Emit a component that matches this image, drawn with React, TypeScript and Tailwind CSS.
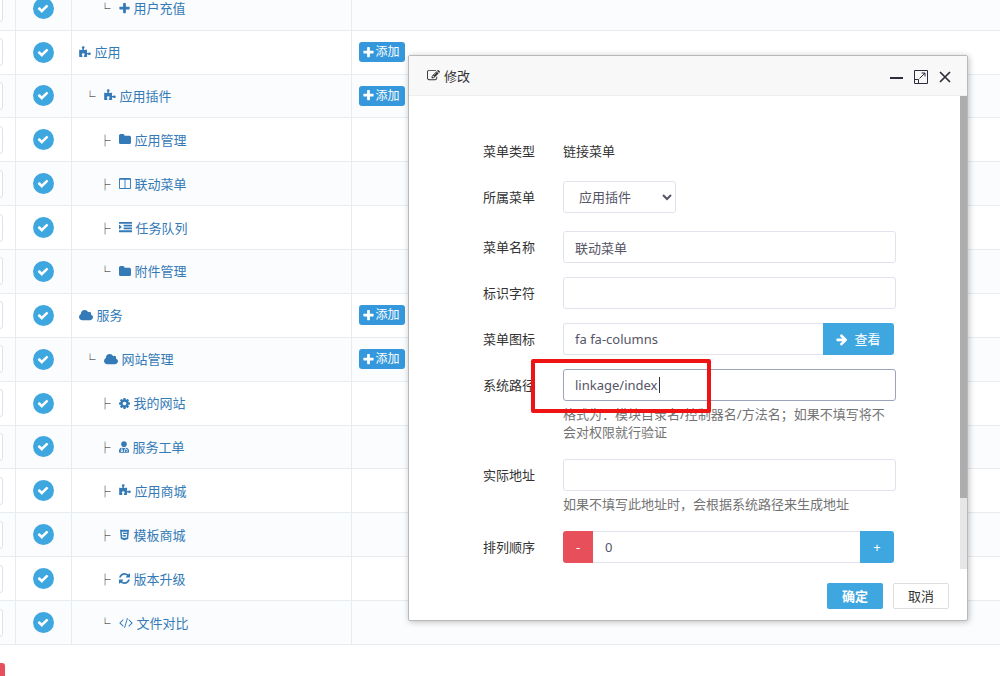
import React, { useId } from "react";
import { FaHtml5, FaUserMd } from "react-icons/fa";

const paths = {
  plus: "M1600 736v192q0 40-28 68t-68 28h-416v416q0 40-28 68t-68 28h-192q-40 0-68-28t-28-68v-416h-416q-40 0-68-28t-28-68v-192q0-40 28-68t68-28h416v-416q0-40 28-68t68-28h192q40 0 68 28t28 68v416h416q40 0 68 28t28 68z",
  arrow: "M1600 960q0 54-37 91l-651 651q-39 37-91 37-51 0-90-37l-75-75q-38-38-38-91t38-91l293-293h-704q-52 0-84.5-37.5t-32.5-90.5v-128q0-53 32.5-90.5t84.5-37.5h704l-293-294q-38-36-38-90t38-90l75-75q38-38 90-38 53 0 91 38l651 651q37 35 37 90z",
  folder: "M1728 608v704q0 92-66 158t-158 66h-1216q-92 0-158-66t-66-158v-960q0-92 66-158t158-66h320q92 0 158 66t66 158v32h672q92 0 158 66t66 158z",
  cloud: "M1984 1152q0 159-112.5 271.5t-271.5 112.5h-1088q-185 0-316.5-131.5t-131.5-316.5q0-132 71-241.5t187-163.5q-2-28-2-43 0-212 150-362t362-150q158 0 286.5 88t187.5 230q70-62 166-62 106 0 181 75t75 181q0 75-41 138 129 30 213 134.5t84 239.5z",
  columns: "M224 1536h608v-1152h-640v1120q0 13 9.5 22.5t22.5 9.5zm1376-32v-1120h-640v1152h608q13 0 22.5-9.5t9.5-22.5zm128-1216v1216q0 66-47 113t-113 47h-1344q-66 0-113-47t-47-113v-1216q0-66 47-113t113-47h1344q66 0 113 47t47 113z",
  indent: "M352 832q0 14-9 23l-288 288q-9 9-23 9-13 0-22.5-9.5t-9.5-22.5v-576q0-13 9.5-22.5t22.5-9.5q14 0 23 9l288 288q9 9 9 23zm1440 480v192q0 13-9.5 22.5t-22.5 9.5h-1728q-13 0-22.5-9.5t-9.5-22.5v-192q0-13 9.5-22.5t22.5-9.5h1728q13 0 22.5 9.5t9.5 22.5zm0-384v192q0 13-9.5 22.5t-22.5 9.5h-1088q-13 0-22.5-9.5t-9.5-22.5v-192q0-13 9.5-22.5t22.5-9.5h1088q13 0 22.5 9.5t9.5 22.5zm0-384v192q0 13-9.5 22.5t-22.5 9.5h-1088q-13 0-22.5-9.5t-9.5-22.5v-192q0-13 9.5-22.5t22.5-9.5h1088q13 0 22.5 9.5t9.5 22.5zm0-384v192q0 13-9.5 22.5t-22.5 9.5h-1728q-13 0-22.5-9.5t-9.5-22.5v-192q0-13 9.5-22.5t22.5-9.5h1728q13 0 22.5 9.5t9.5 22.5z",
  puzzle: "M1755 1083q0 81-44.5 135t-123.5 54q-41 0-77.5-17.5t-59-38-56.5-38-71-17.5q-110 0-110 124 0 39 16 115t15 115v5q-22 0-33 1-34 3-97.5 11.5t-115.5 13.5-98 5q-61 0-103-26.5t-42-83.5q0-37 17.5-71t38-56.5 38-59 17.5-77.5q0-79-54-123.5t-135-44.5q-84 0-143 45.5t-59 127.5q0 43 15 83t33.5 64.5 33.5 53 15 50.5q0 45-46 89-37 35-117 35-95 0-245-24-9-2-27.5-4t-27.5-4l-13-2q-1 0-3-1-2 0-2-1v-1024q2 1 17.5 3.5t34 5 21.5 3.5q150 24 245 24 80 0 117-35 46-44 46-89 0-22-15-50.5t-33.5-53-33.5-64.5-15-83q0-82 59-127.5t144-45.5q80 0 134 44.5t54 123.5q0 41-17.5 77.5t-38 59-38 56.5-17.5 71q0 57 42 83.5t103 26.5q64 0 180-15t163-17v2q-1 2-3.5 17.5t-5 34-3.5 21.5q-24 150-24 245 0 80 35 117 44 46 89 46 22 0 50.5-15t53-33.5 64.5-33.5 83-15q82 0 127.5 59t45.5 143z",
  refresh: "M1639 1056q0 5-1 7-64 268-268 434.5t-478 166.5q-146 0-282.5-55t-243.5-157l-129 129q-19 19-45 19t-45-19-19-45v-448q0-26 19-45t45-19h448q26 0 45 19t19 45-19 45l-137 137q71 66 161 102t187 36q134 0 250-65t186-179q11-17 53-117 8-23 30-23h192q13 0 22.5 9.5t9.5 22.5zm25-800v448q0 26-19 45t-45 19h-448q-26 0-45-19t-19-45 19-45l138-138q-148-137-349-137-134 0-250 65t-186 179q-11 17-53 117-8 23-30 23h-199q-13 0-22.5-9.5t-9.5-22.5v-7q65-268 270-434.5t480-166.5q146 0 284 55.5t245 156.5l130-129q19-19 45-19t45 19 19 45z",
  cog: "M1152 896q0-106-75-181t-181-75-181 75-75 181 75 181 181 75 181-75 75-181zm512-109v222q0 12-8 23t-20 13l-185 28q-19 54-39 91 35 50 107 138 10 12 10 25t-9 23q-27 37-99 108t-94 71q-12 0-26-9l-138-108q-44 23-91 38-16 136-29 186-7 28-36 28h-222q-14 0-24.5-8.5t-11.5-21.5l-28-184q-49-16-90-37l-141 107q-10 9-25 9-14 0-25-11-126-114-165-168-7-10-7-23 0-12 8-23 15-21 51-66.5t54-70.5q-27-50-41-99l-183-27q-13-2-21-12.5t-8-23.5v-222q0-12 8-23t19-13l186-28q14-46 39-92-40-57-107-138-10-12-10-24 0-10 9-23 26-36 98.5-107.5t94.5-71.5q13 0 26 10l138 107q44-23 91-38 16-136 29-186 7-28 36-28h222q14 0 24.5 8.5t11.5 21.5l28 184q49 16 90 37l142-107q9-9 24-9 13 0 25 10 129 119 165 170 7 8 7 22 0 12-8 23-15 21-51 66.5t-54 70.5q26 50 41 98l183 28q13 2 21 12.5t8 23.5z",
  code: "M617 1399l-50 50q-10 10-23 10t-23-10l-466-466q-10-10-10-23t10-23l466-466q10-10 23-10t23 10l50 50q10 10 10 23t-10 23l-393 393 393 393q10 10 10 23t-10 23zm591-1067l-373 1291q-4 13-15.5 19.5t-23.5 2.5l-62-17q-13-4-19.5-15.5t-2.5-24.5l373-1291q4-13 15.5-19.5t23.5-2.5l62 17q13 4 19.5 15.5t2.5 24.5zm657 651l-466 466q-10 10-23 10t-23-10l-50-50q-10-10-10-23t10-23l393-393-393-393q-10-10-10-23t10-23l50-50q10-10 23-10t23 10l466 466q10 10 10 23t-10 23z",
  edit: "M888 1184l116-116-152-152-116 116v56h96v96h56zm440-720q-16-16-33 1l-350 350q-17 17-1 33t33-1l350-350q17-17 1-33zm80 594v190q0 119-84.5 203.5t-203.5 84.5h-832q-119 0-203.5-84.5t-84.5-203.5v-832q0-119 84.5-203.5t203.5-84.5h832q63 0 117 25 15 7 18 23 3 17-9 29l-49 49q-14 14-32 8-23-6-45-6h-832q-66 0-113 47t-47 113v832q0 66 47 113t113 47h832q66 0 113-47t47-113v-126q0-13 9-22l64-64q15-15 35-7t20 29zm-96-738l288 288-672 672h-288v-288zm444 132l-92 92-288-288 92-92q28-28 68-28t68 28l152 152q28 28 28 68t-28 68z",
  check: "M1671 566q0 40-28 68l-724 724-136 136q-28 28-68 28t-68-28l-136-136-362-362q-28-28-28-68t28-68l136-136q28-28 68-28t68 28l294 295 656-657q28-28 68-28t68 28l136 136q28 28 28 68z",
};

const boxes = {
  plus: ["192 0 1408 1792", "w-[11px]"],
  arrow: ["64 0 1664 1792", "w-3"],
  folder: ["64 0 1664 1792", "w-3"],
  cloud: ["64 0 1920 1792", "w-[14px]"],
  columns: ["64 0 1664 1792", "w-3"],
  indent: ["0 0 1792 1792", "w-[13px]"],
  puzzle: ["64 0 1728 1792", "w-3"],
  refresh: ["128 0 1536 1792", "w-[11px]"],
  cog: ["128 0 1536 1792", "w-[11px]"],
  code: ["0 0 1920 1792", "w-[14px]"],
  edit: ["0 0 1792 1792", "w-[13px]"],
  check: ["0 0 1792 1792", "w-3"],
};

type GlyphName = keyof typeof paths;

function Glyph({ name }: { name: GlyphName }) {
  const [viewBox, width] = boxes[name];
  return (
    <svg viewBox={viewBox} className={`${width} h-[13px] shrink-0`} fill="currentColor" aria-hidden="true">
      <path d={paths[name]} />
    </svg>
  );
}

type MenuItem = {
  label: string;
  icon: GlyphName | "doctor" | "html5";
  level: 0 | 1 | 2;
  branch?: string;
  addable?: boolean;
};

const items: MenuItem[] = [
  { label: "用户充值", icon: "plus", level: 2, branch: "└" },
  { label: "应用", icon: "puzzle", level: 0, addable: true },
  { label: "应用插件", icon: "puzzle", level: 1, branch: "└", addable: true },
  { label: "应用管理", icon: "folder", level: 2, branch: "├" },
  { label: "联动菜单", icon: "columns", level: 2, branch: "├" },
  { label: "任务队列", icon: "indent", level: 2, branch: "├" },
  { label: "附件管理", icon: "folder", level: 2, branch: "└" },
  { label: "服务", icon: "cloud", level: 0, addable: true },
  { label: "网站管理", icon: "cloud", level: 1, branch: "└", addable: true },
  { label: "我的网站", icon: "cog", level: 2, branch: "├" },
  { label: "服务工单", icon: "doctor", level: 2, branch: "├" },
  { label: "应用商城", icon: "puzzle", level: 2, branch: "├" },
  { label: "模板商城", icon: "html5", level: 2, branch: "├" },
  { label: "版本升级", icon: "refresh", level: 2, branch: "├" },
  { label: "文件对比", icon: "code", level: 2, branch: "└" },
];

const indents = { 0: "", 1: "pl-[6px]", 2: "pl-[21px]" };

function ItemIcon({ name }: { name: MenuItem["icon"] }) {
  if (name === "doctor") return <FaUserMd className="h-3 w-[10px] shrink-0" />;
  if (name === "html5") return <FaHtml5 className="h-3 w-[11px] shrink-0" />;
  return <Glyph name={name} />;
}

function MenuTable() {
  return (
    <table className="h-[658px] w-full table-fixed border-collapse">
      <colgroup>
        <col className="w-[76px]" />
        <col className="w-14" />
        <col className="w-[280px]" />
        <col />
      </colgroup>
      <tbody>
        {items.map((item) => (
          <tr key={item.label} className="border-b border-[#e7ecf1] odd:bg-[#fbfcfd]">
            <td className="border-r border-[#e7ecf1] pr-3 pl-2">
              <input
                aria-label={`${item.label}排序`}
                className="block h-7 w-full rounded-[3px] border border-[#e0e2ea] bg-white"
              />
            </td>
            <td className="border-r border-[#e7ecf1]">
              <button
                type="button"
                aria-label={`${item.label}可用`}
                className="mx-auto flex size-[21px] items-center justify-center rounded-full bg-[#3fa7e0] text-white"
              >
                <Glyph name="check" />
              </button>
            </td>
            <td className="border-r border-[#e7ecf1] px-[7px]">
              <div className={`flex items-center gap-2 ${indents[item.level]}`}>
                {item.branch && (
                  <span className="pt-[2px] text-[11px] leading-4 font-medium text-[#111]">{item.branch}</span>
                )}
                <a href="#menu" className="flex items-center gap-1 text-[#337ab7]">
                  <ItemIcon name={item.icon} />
                  {item.label}
                </a>
              </div>
            </td>
            <td className="px-[7px]">
              {item.addable && (
                <button
                  type="button"
                  className="flex h-5 w-[46px] items-center justify-center gap-px rounded-[3px] bg-[#3598dc] text-xs text-white"
                >
                  <Glyph name="plus" />
                  添加
                </button>
              )}
            </td>
          </tr>
        ))}
      </tbody>
    </table>
  );
}

function Field({ label, help, children }: { label: string; help?: string; children: (id: string) => React.ReactNode }) {
  const id = useId();
  return (
    <div className="flex gap-7">
      <label htmlFor={id} className="w-[53px] shrink-0 text-right leading-8 text-[#333]">
        {label}
      </label>
      <div className="min-w-0 flex-1">
        {children(id)}
        {help && <p className="mt-1 mb-1 leading-[18px] text-[#737373]">{help}</p>}
      </div>
    </div>
  );
}

const control = "block h-8 w-full rounded-[3px] border border-[#e2e2ec] bg-white px-[11px] text-[#555566] outline-none";

function EditDialog() {
  return (
    <section
      role="dialog"
      aria-label="修改"
      className="absolute top-[55px] right-8 w-[560px] rounded-xs border border-[#b9b9b9] bg-white shadow-[1px_1px_6px_rgba(0,0,0,0.25)]"
    >
      <header className="flex h-10 items-center justify-between border-b border-[#eee] bg-[#f8f8f8] pr-[15px] pl-[18px] text-[#333]">
        <h2 className="flex items-center gap-1">
          <Glyph name="edit" />
          修改
        </h2>
        <div className="flex items-center gap-[10px] pt-[2px] text-[#2e2d3c]">
          <button type="button" aria-label="最小化">
            <svg className="size-[14px]" viewBox="0 0 14 14" stroke="currentColor" strokeWidth="2" fill="none">
              <path d="M0 8h13" />
            </svg>
          </button>
          <button type="button" aria-label="最大化">
            <svg className="size-[14px]" viewBox="0 0 14 14" stroke="currentColor" fill="none">
              <path d="M.5 7V.5h13v13H7M.5 9.500h4v4h-4zM.5 7v3M4 13.500h4M5.500 8.500L11 3M7.500 3H11v3.500" />
            </svg>
          </button>
          <button type="button" aria-label="关闭">
            <svg className="size-[14px]" viewBox="0 0 14 14" stroke="currentColor" strokeWidth="1.700" fill="none">
              <path d="M2 2l10 10M12 2L2 12" />
            </svg>
          </button>
        </div>
      </header>

      <div className="flex">
        <form className="flex min-w-0 flex-1 flex-col gap-[14px] pt-[39px] pr-16 pb-[6px] pl-[73px]">
          <Field label="菜单类型">{(id) => <output id={id} className="block leading-8 text-[#333]">链接菜单</output>}</Field>
          <div className="pb-1">
            <Field label="所属菜单">
              {(id) => (
                <select id={id} className="block h-8 w-[113px] rounded-[3px] border border-[#e2e2ec] bg-white pl-[11px] text-[#555566]">
                  <option>应用插件</option>
                </select>
              )}
            </Field>
          </div>
          <Field label="菜单名称">{(id) => <input id={id} className={control} defaultValue="联动菜单" />}</Field>
          <Field label="标识字符">{(id) => <input id={id} className={control} />}</Field>
          <Field label="菜单图标">
            {(id) => (
              <div className="mr-[2px] flex">
                <input
                  id={id}
                  defaultValue="fa fa-columns"
                  className="h-8 min-w-0 flex-1 rounded-l-[3px] border border-r-0 border-[#e2e2ec] bg-white px-[11px] text-[#555566] outline-none"
                />
                <button
                  type="button"
                  className="flex h-8 w-[71px] items-center justify-center gap-[6px] rounded-r-[3px] bg-[#3fa7e0] text-white"
                >
                  <Glyph name="arrow" />
                  查看
                </button>
              </div>
            )}
          </Field>
          <Field label="系统路径" help="格式为：模块目录名/控制器名/方法名；如果不填写将不会对权限就行验证">
            {(id) => (
              <div className="relative">
                <input
                  id={id}
                  defaultValue="linkage/index"
                  className="block h-8 w-full rounded-[3px] border border-[#9ea3bd] bg-white px-[11px] text-[#555566] outline-none"
                />
                <span className="absolute top-2 left-24 h-4 w-px bg-[#333]" />
                <span className="pointer-events-none absolute -top-[10px] -left-8 h-[54px] w-[180px] rounded-xs border-4 border-[#ee1414]" />
              </div>
            )}
          </Field>
          <Field label="实际地址" help="如果不填写此地址时，会根据系统路径来生成地址">
            {(id) => <input id={id} className={control} />}
          </Field>
          <Field label="排列顺序">
            {(id) => (
              <div className="mr-[2px] flex">
                <button type="button" className="h-8 w-[30px] rounded-l-[3px] bg-[#e7505a] text-white">
                  -
                </button>
                <input
                  id={id}
                  defaultValue="0"
                  className="h-8 min-w-0 flex-1 border-y border-[#e2e2ec] bg-white px-3 text-[#555566] outline-none"
                />
                <button type="button" className="h-8 w-[34px] rounded-r-[3px] bg-[#3fa7e0] text-white">
                  +
                </button>
              </div>
            )}
          </Field>
        </form>
        <div className="w-[7px] bg-[#e6e6e6]">
          <div className="h-[85%] bg-[#adadad]" />
        </div>
      </div>

      <footer className="flex justify-end gap-[10px] pt-[14px] pr-[18px] pb-[11px]">
        <button type="button" className="h-[26px] w-14 rounded-xs bg-[#3fa7e0] font-bold text-white">
          确定
        </button>
        <button type="button" className="h-[26px] w-14 rounded-xs border border-[#dedede] bg-white text-[#333]">
          取消
        </button>
      </footer>
    </section>
  );
}

export default function App() {
  return (
    <div className="relative h-screen overflow-hidden bg-white font-['Noto_Sans','Noto_Sans_CJK_SC',sans-serif] text-[13px] leading-5">
      <main className="-mt-[13px] -ml-[61px]">
        <MenuTable />
        <div className="px-2 pt-[18px]">
          <button type="button" aria-label="删除" className="block h-8 w-[58px] rounded-[3px] bg-[#e7505a]" />
        </div>
      </main>
      <EditDialog />
    </div>
  );
}
